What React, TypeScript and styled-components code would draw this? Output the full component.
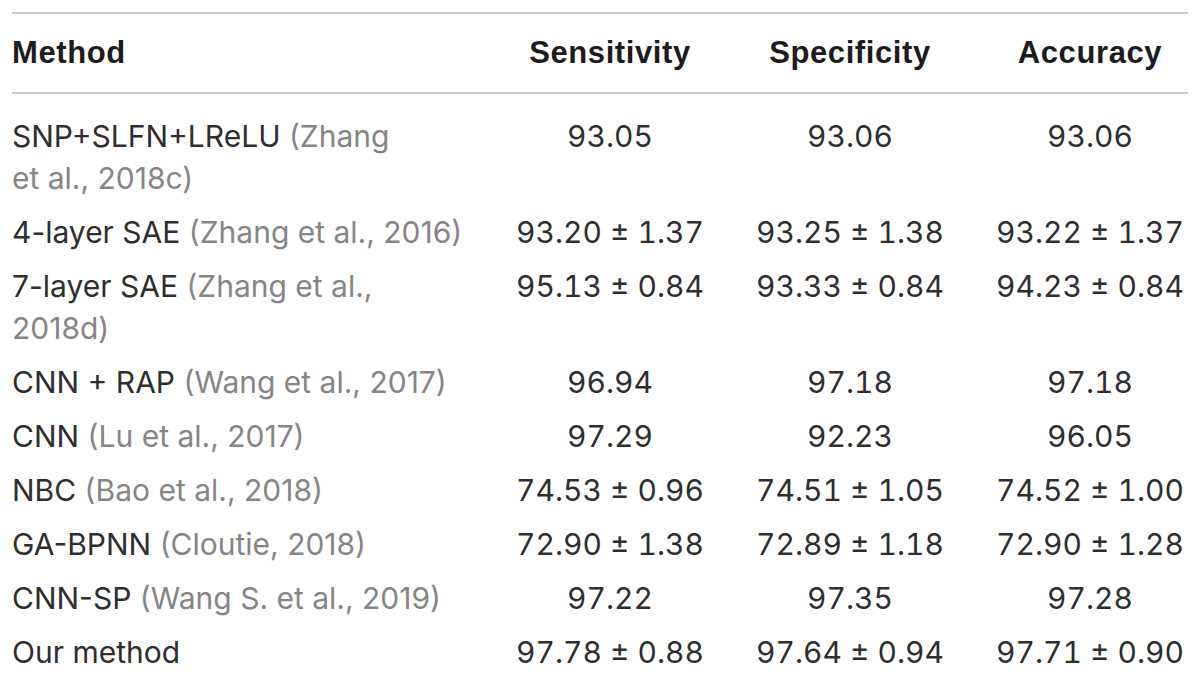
import styled, { createGlobalStyle } from "styled-components";

const Global = createGlobalStyle`
  html, body { margin: 0; background: #fff; overflow: hidden; }
`;

const Page = styled.div`
  padding: 12px 12px 0;
`;

const Table = styled.div`
  width: 1176px;
  font-family: "Inter", "Liberation Sans", Arial, sans-serif;
  color: #2e2e2e;
`;

const Row = styled.div`
  display: grid;
  grid-template-columns: 478px 240px 240px 240px;
`;

const HeadRow = styled(Row)`
  box-sizing: border-box;
  height: 82px;
  align-items: center;
  border-top: 2px solid #cbcbcb;
  border-bottom: 2px solid #cbcbcb;
`;

const HeadCell = styled.div<{ $left?: boolean }>`
  font-family: "Liberation Sans", Arial, sans-serif;
  font-weight: 700;
  font-size: 31px;
  letter-spacing: 0.6px;
  color: #1c1c1c;
  text-align: ${(p) => (p.$left ? "left" : "center")};
`;

const Body = styled.div`
  padding-top: 15px;
`;

const Cell = styled.div<{ $num?: boolean }>`
  padding: 6px 0;
  font-size: 30px;
  line-height: 42px;
  white-space: nowrap;
  font-variant-numeric: ${(p) => (p.$num ? "tabular-nums" : "normal")};
  text-align: ${(p) => (p.$num ? "center" : "left")};
`;

const Cite = styled.span`
  color: #858585;
`;

type Entry = {
  name: string;
  cite: React.ReactNode;
  values: string[];
};

const rows: Entry[] = [
  {
    name: "SNP+SLFN+LReLU",
    cite: (
      <>
        (Zhang
        <br />
        et al., 2018c)
      </>
    ),
    values: ["93.05", "93.06", "93.06"],
  },
  {
    name: "4-layer SAE",
    cite: "(Zhang et al., 2016)",
    values: ["93.20 ± 1.37", "93.25 ± 1.38", "93.22 ± 1.37"],
  },
  {
    name: "7-layer SAE",
    cite: (
      <>
        (Zhang et al.,
        <br />
        2018d)
      </>
    ),
    values: ["95.13 ± 0.84", "93.33 ± 0.84", "94.23 ± 0.84"],
  },
  { name: "CNN + RAP", cite: "(Wang et al., 2017)", values: ["96.94", "97.18", "97.18"] },
  { name: "CNN", cite: "(Lu et al., 2017)", values: ["97.29", "92.23", "96.05"] },
  {
    name: "NBC",
    cite: "(Bao et al., 2018)",
    values: ["74.53 ± 0.96", "74.51 ± 1.05", "74.52 ± 1.00"],
  },
  {
    name: "GA-BPNN",
    cite: "(Cloutie, 2018)",
    values: ["72.90 ± 1.38", "72.89 ± 1.18", "72.90 ± 1.28"],
  },
  { name: "CNN-SP", cite: "(Wang S. et al., 2019)", values: ["97.22", "97.35", "97.28"] },
  {
    name: "Our method",
    cite: null,
    values: ["97.78 ± 0.88", "97.64 ± 0.94", "97.71 ± 0.90"],
  },
];

export default function App() {
  return (
    <>
      <Global />
      <Page>
        <Table>
          <HeadRow>
            <HeadCell $left>Method</HeadCell>
            <HeadCell>Sensitivity</HeadCell>
            <HeadCell>Specificity</HeadCell>
            <HeadCell>Accuracy</HeadCell>
          </HeadRow>
          <Body>
            {rows.map((r) => (
              <Row key={r.name}>
                <Cell>
                  {r.name}
                  {r.cite && <> </>}
                  {r.cite && <Cite>{r.cite}</Cite>}
                </Cell>
                {r.values.map((v, i) => (
                  <Cell key={i} $num>
                    {v}
                  </Cell>
                ))}
              </Row>
            ))}
          </Body>
        </Table>
      </Page>
    </>
  );
}
